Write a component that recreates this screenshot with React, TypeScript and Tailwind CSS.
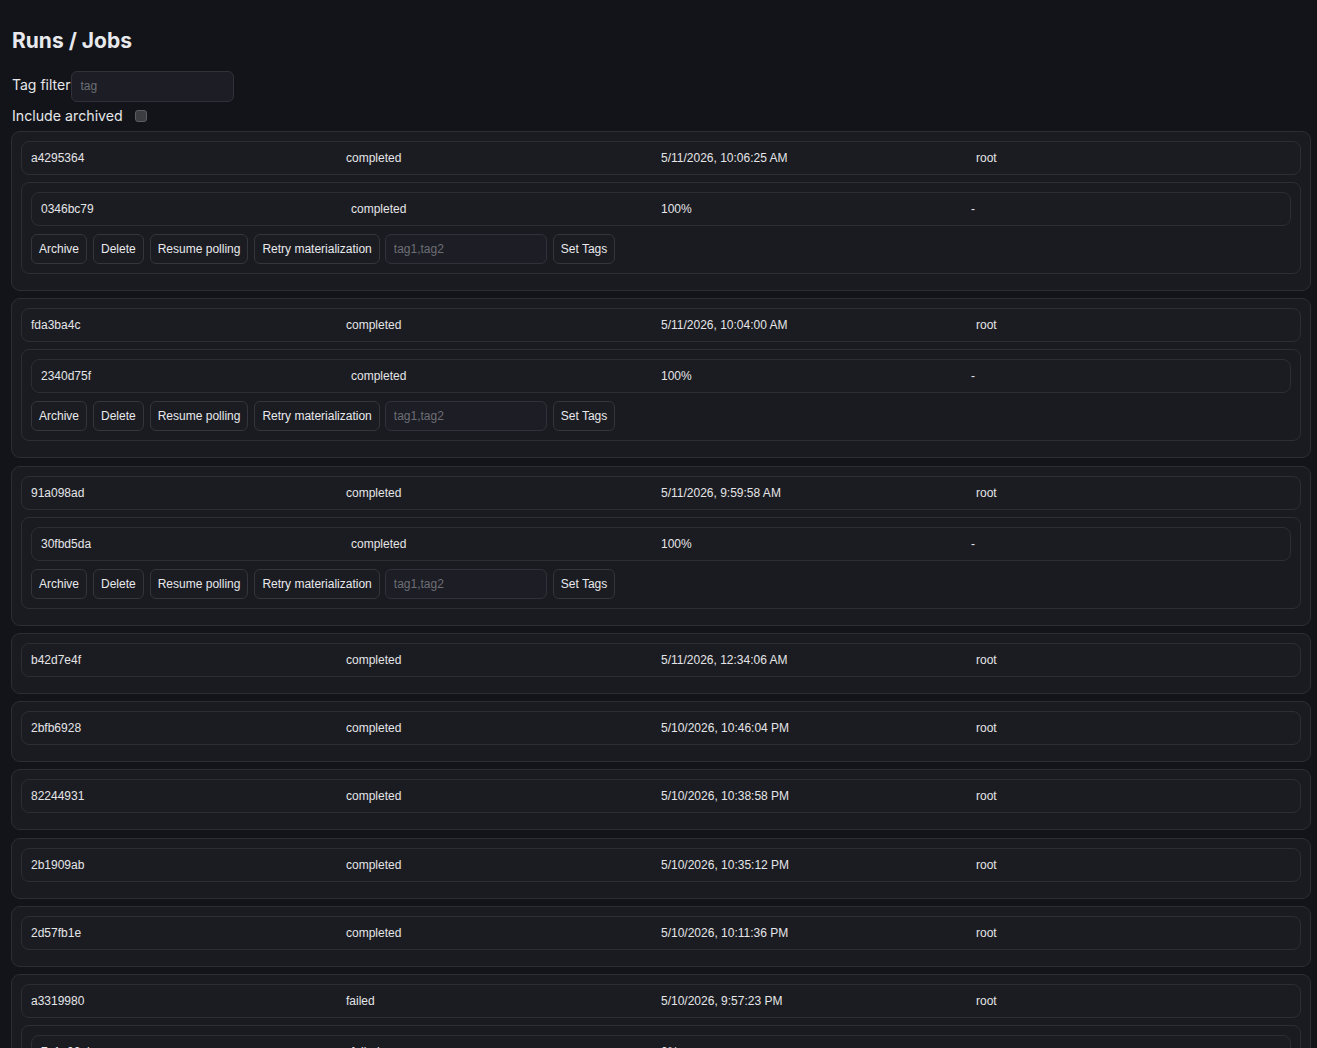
import React from "react";

type Job = { id: string; status: string; progress: string; err: string };
type Run = { id: string; status: string; date: string; user: string; jobs: Job[] };

const runs: Run[] = [
  { id: "a4295364", status: "completed", date: "5/11/2026, 10:06:25 AM", user: "root", jobs: [{ id: "0346bc79", status: "completed", progress: "100%", err: "-" }] },
  { id: "fda3ba4c", status: "completed", date: "5/11/2026, 10:04:00 AM", user: "root", jobs: [{ id: "2340d75f", status: "completed", progress: "100%", err: "-" }] },
  { id: "91a098ad", status: "completed", date: "5/11/2026, 9:59:58 AM", user: "root", jobs: [{ id: "30fbd5da", status: "completed", progress: "100%", err: "-" }] },
  { id: "b42d7e4f", status: "completed", date: "5/11/2026, 12:34:06 AM", user: "root", jobs: [] },
  { id: "2bfb6928", status: "completed", date: "5/10/2026, 10:46:04 PM", user: "root", jobs: [] },
  { id: "82244931", status: "completed", date: "5/10/2026, 10:38:58 PM", user: "root", jobs: [] },
  { id: "2b1909ab", status: "completed", date: "5/10/2026, 10:35:12 PM", user: "root", jobs: [] },
  { id: "2d57fb1e", status: "completed", date: "5/10/2026, 10:11:36 PM", user: "root", jobs: [] },
  { id: "a3319980", status: "failed", date: "5/10/2026, 9:57:23 PM", user: "root", jobs: [{ id: "7c1e02ab", status: "failed", progress: "0%", err: "-" }] },
];

const rowCls =
  "grid grid-cols-4 items-center h-[34px] px-[9px] border border-[#2d2e35] rounded-[8px] bg-[#1b1c21] text-[12px] text-[#e4e5e8]";

function Btn({ children }: { children: React.ReactNode }) {
  return (
    <button className="h-[30px] px-[7px] border border-[#34353d] rounded-[6px] bg-[#1b1c22] text-[12px] text-[#e8e9ec] whitespace-nowrap">
      {children}
    </button>
  );
}

export default function App() {
  return (
    <div
      className="min-h-screen bg-[#131419] pl-[11px] pr-[6px] pt-[28px] pb-[20px] text-[#e6e7ea]"
      style={{ fontFamily: "Inter, 'Noto Sans', sans-serif" }}
    >
      <h1 className="text-[21px] leading-[26px] font-bold text-[#e8e9ec] pl-[1px] mb-[17px]">Runs / Jobs</h1>
      <div className="flex items-center h-[30px] pl-[1px]">
        <span className="text-[14px] pb-[4px] text-[#e6e7ea]">Tag filter</span>
        <input
          placeholder="tag"
          className="ml-[1px] w-[163px] h-[31px] px-[8px] border border-[#30313a] rounded-[6px] bg-[#1c1d25] text-[12px] text-[#e4e5e8] placeholder:text-[#6d6e75] outline-none"
          style={{ fontFamily: "'Liberation Sans', Arial, sans-serif" }}
        />
      </div>
      <div className="flex items-center h-[22px] mt-[4px] mb-[4px] pl-[1px]">
        <span className="text-[14.2px] text-[#e6e7ea]">Include archived</span>
        <span className="ml-[12px] w-[12px] h-[12px] rounded-[3px] border border-[#5c5d62] bg-[#3c3d41]" />
      </div>
      <div
        className="flex flex-col gap-[7.3px]"
        style={{ fontFamily: "'Liberation Sans', Arial, sans-serif" }}
      >
        {runs.map((r) => (
          <div key={r.id} className="border border-[#2d2e35] rounded-[9px] bg-[#1a1b20] pt-[9px] pb-[16px] px-[9px]">
            <div className={rowCls}>
              <span>{r.id}</span>
              <span>{r.status}</span>
              <span>{r.date}</span>
              <span>{r.user}</span>
            </div>
            {r.jobs.map((j) => (
              <div key={j.id} className="mt-[7px] border border-[#2d2e35] rounded-[8px] bg-[#1a1b20] p-[9px]">
                <div className={rowCls}>
                  <span>{j.id}</span>
                  <span>{j.status}</span>
                  <span>{j.progress}</span>
                  <span>{j.err}</span>
                </div>
                <div className="flex items-center gap-[6px] mt-[8px]">
                  <Btn>Archive</Btn>
                  <Btn>Delete</Btn>
                  <Btn>Resume polling</Btn>
                  <Btn>Retry materialization</Btn>
                  <input
                    placeholder="tag1,tag2"
                    className="-ml-[1px] w-[162px] h-[30px] px-[8px] border border-[#30313a] rounded-[6px] bg-[#1c1d25] text-[12px] text-[#e4e5e8] placeholder:text-[#6d6e75] outline-none"
                  />
                  <Btn>Set Tags</Btn>
                </div>
              </div>
            ))}
          </div>
        ))}
      </div>
    </div>
  );
}
